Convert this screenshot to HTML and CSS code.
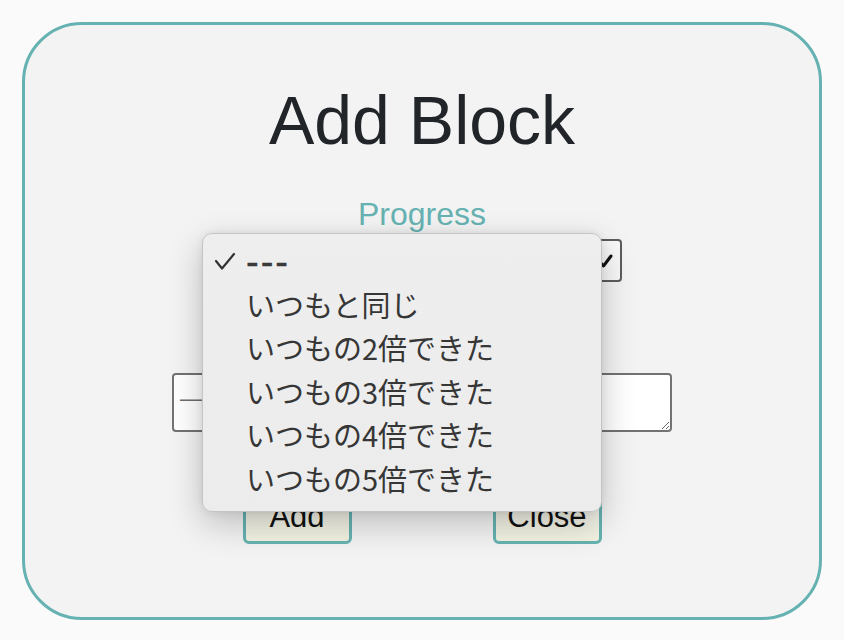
FILE: index.html
```html
<!DOCTYPE html>
<html lang="ja">
<head>
<meta charset="utf-8">
<title>Add Block</title>
<link rel="stylesheet" href="styles.css">
</head>
<body>
  <div class="card">
    <h1 class="title">Add Block</h1>
    <label class="field-label">Progress</label>
    <div class="select-wrap">
      <div class="select">
        <svg class="select-arrow" width="16" height="14" viewBox="0 0 16 14">
          <path d="M2 7 L6.5 12 L14 2" fill="none" stroke="#111" stroke-width="3" stroke-linecap="round" stroke-linejoin="round"/>
        </svg>
      </div>
      <ul class="popup">
        <li class="option selected">
          <svg class="check" width="22" height="20" viewBox="0 0 22 20">
            <path d="M2 9 L8 16.5 L20 2" fill="none" stroke="#333" stroke-width="2.2" stroke-linecap="round" stroke-linejoin="round"/>
          </svg>
          <span class="dashes">---</span>
        </li>
        <li class="option">いつもと同じ</li>
        <li class="option">いつもの2倍できた</li>
        <li class="option">いつもの3倍できた</li>
        <li class="option">いつもの4倍できた</li>
        <li class="option">いつもの5倍できた</li>
      </ul>
    </div>
    <textarea class="memo" placeholder="—"></textarea>
    <div class="actions">
      <button class="btn">Add</button>
      <button class="btn">Close</button>
    </div>
  </div>
</body>
</html>
```

FILE: styles.css
```css
html, body {
  margin: 0;
  padding: 0;
}

body {
  background: #fafafa;
  padding: 22px;
  font-family: "Liberation Sans", Arial, sans-serif;
}

.card {
  box-sizing: border-box;
  width: 800px;
  height: 598px;
  border: 3px solid #66b2b2;
  border-radius: 60px;
  background: #f3f3f3;
  display: flex;
  flex-direction: column;
  align-items: center;
  padding-top: 55px;
}

.title {
  margin: 0;
  font-size: 68px;
  line-height: 80px;
  font-weight: 400;
  color: #212529;
}

.field-label {
  margin-top: 35px;
  font-size: 32px;
  line-height: 38px;
  color: #66b2b2;
}

.select-wrap {
  position: relative;
  margin-top: 6px;
}

.select {
  box-sizing: border-box;
  width: 400px;
  height: 43px;
  border: 2px solid #5c5c5c;
  border-radius: 4px;
  background: #f8f8f8;
  display: flex;
  align-items: center;
  justify-content: flex-end;
  padding: 0 7px 0 12px;
}

.select-arrow {
  display: block;
}

.popup {
  position: absolute;
  top: -6px;
  left: -20px;
  box-sizing: border-box;
  width: 400px;
  height: 279px;
  margin: 0;
  padding: 5px 0 0 0;
  list-style: none;
  background: linear-gradient(#eeeeee, #ececec);
  border: 1px solid #c4c4c4;
  border-radius: 10px;
  box-shadow: 0 12px 34px rgba(0, 0, 0, 0.22), 0 0 8px rgba(0, 0, 0, 0.08);
  font-family: "Noto Sans CJK JP", "Noto Sans", sans-serif;
  font-size: 29px;
  color: #363636;
  z-index: 10;
}

.option {
  position: relative;
  height: 43.6px;
  line-height: 43.6px;
  padding-left: 43px;
  white-space: nowrap;
}

.check {
  position: absolute;
  left: 11px;
  top: 13px;
}

.dashes {
  letter-spacing: 2px;
  font-family: "Liberation Sans", sans-serif;
  font-size: 38px;
  line-height: 0;
  vertical-align: -2px;
  color: #3a3a3a;
  -webkit-text-stroke: 0.4px #3a3a3a;
}

.memo {
  box-sizing: border-box;
  margin-top: 91px;
  width: 500px;
  height: 59px;
  border: 2px solid #727272;
  border-radius: 4px;
  background: #ffffff;
  padding: 9px 6px;
  font-family: "Liberation Sans", sans-serif;
  font-size: 24px;
}

.memo::placeholder {
  color: #6e6e6e;
  opacity: 1;
}

.actions {
  margin-top: 58px;
  display: flex;
  gap: 141px;
}

.btn {
  box-sizing: border-box;
  width: 109px;
  padding: 6px 0 6px;
  border: 3px solid #66b2b2;
  border-radius: 6px;
  background: linear-gradient(#f1f1ea, #f3f3e2);
  font-family: "Liberation Sans", sans-serif;
  font-size: 31px;
  line-height: normal;
  color: #111;
}
```
